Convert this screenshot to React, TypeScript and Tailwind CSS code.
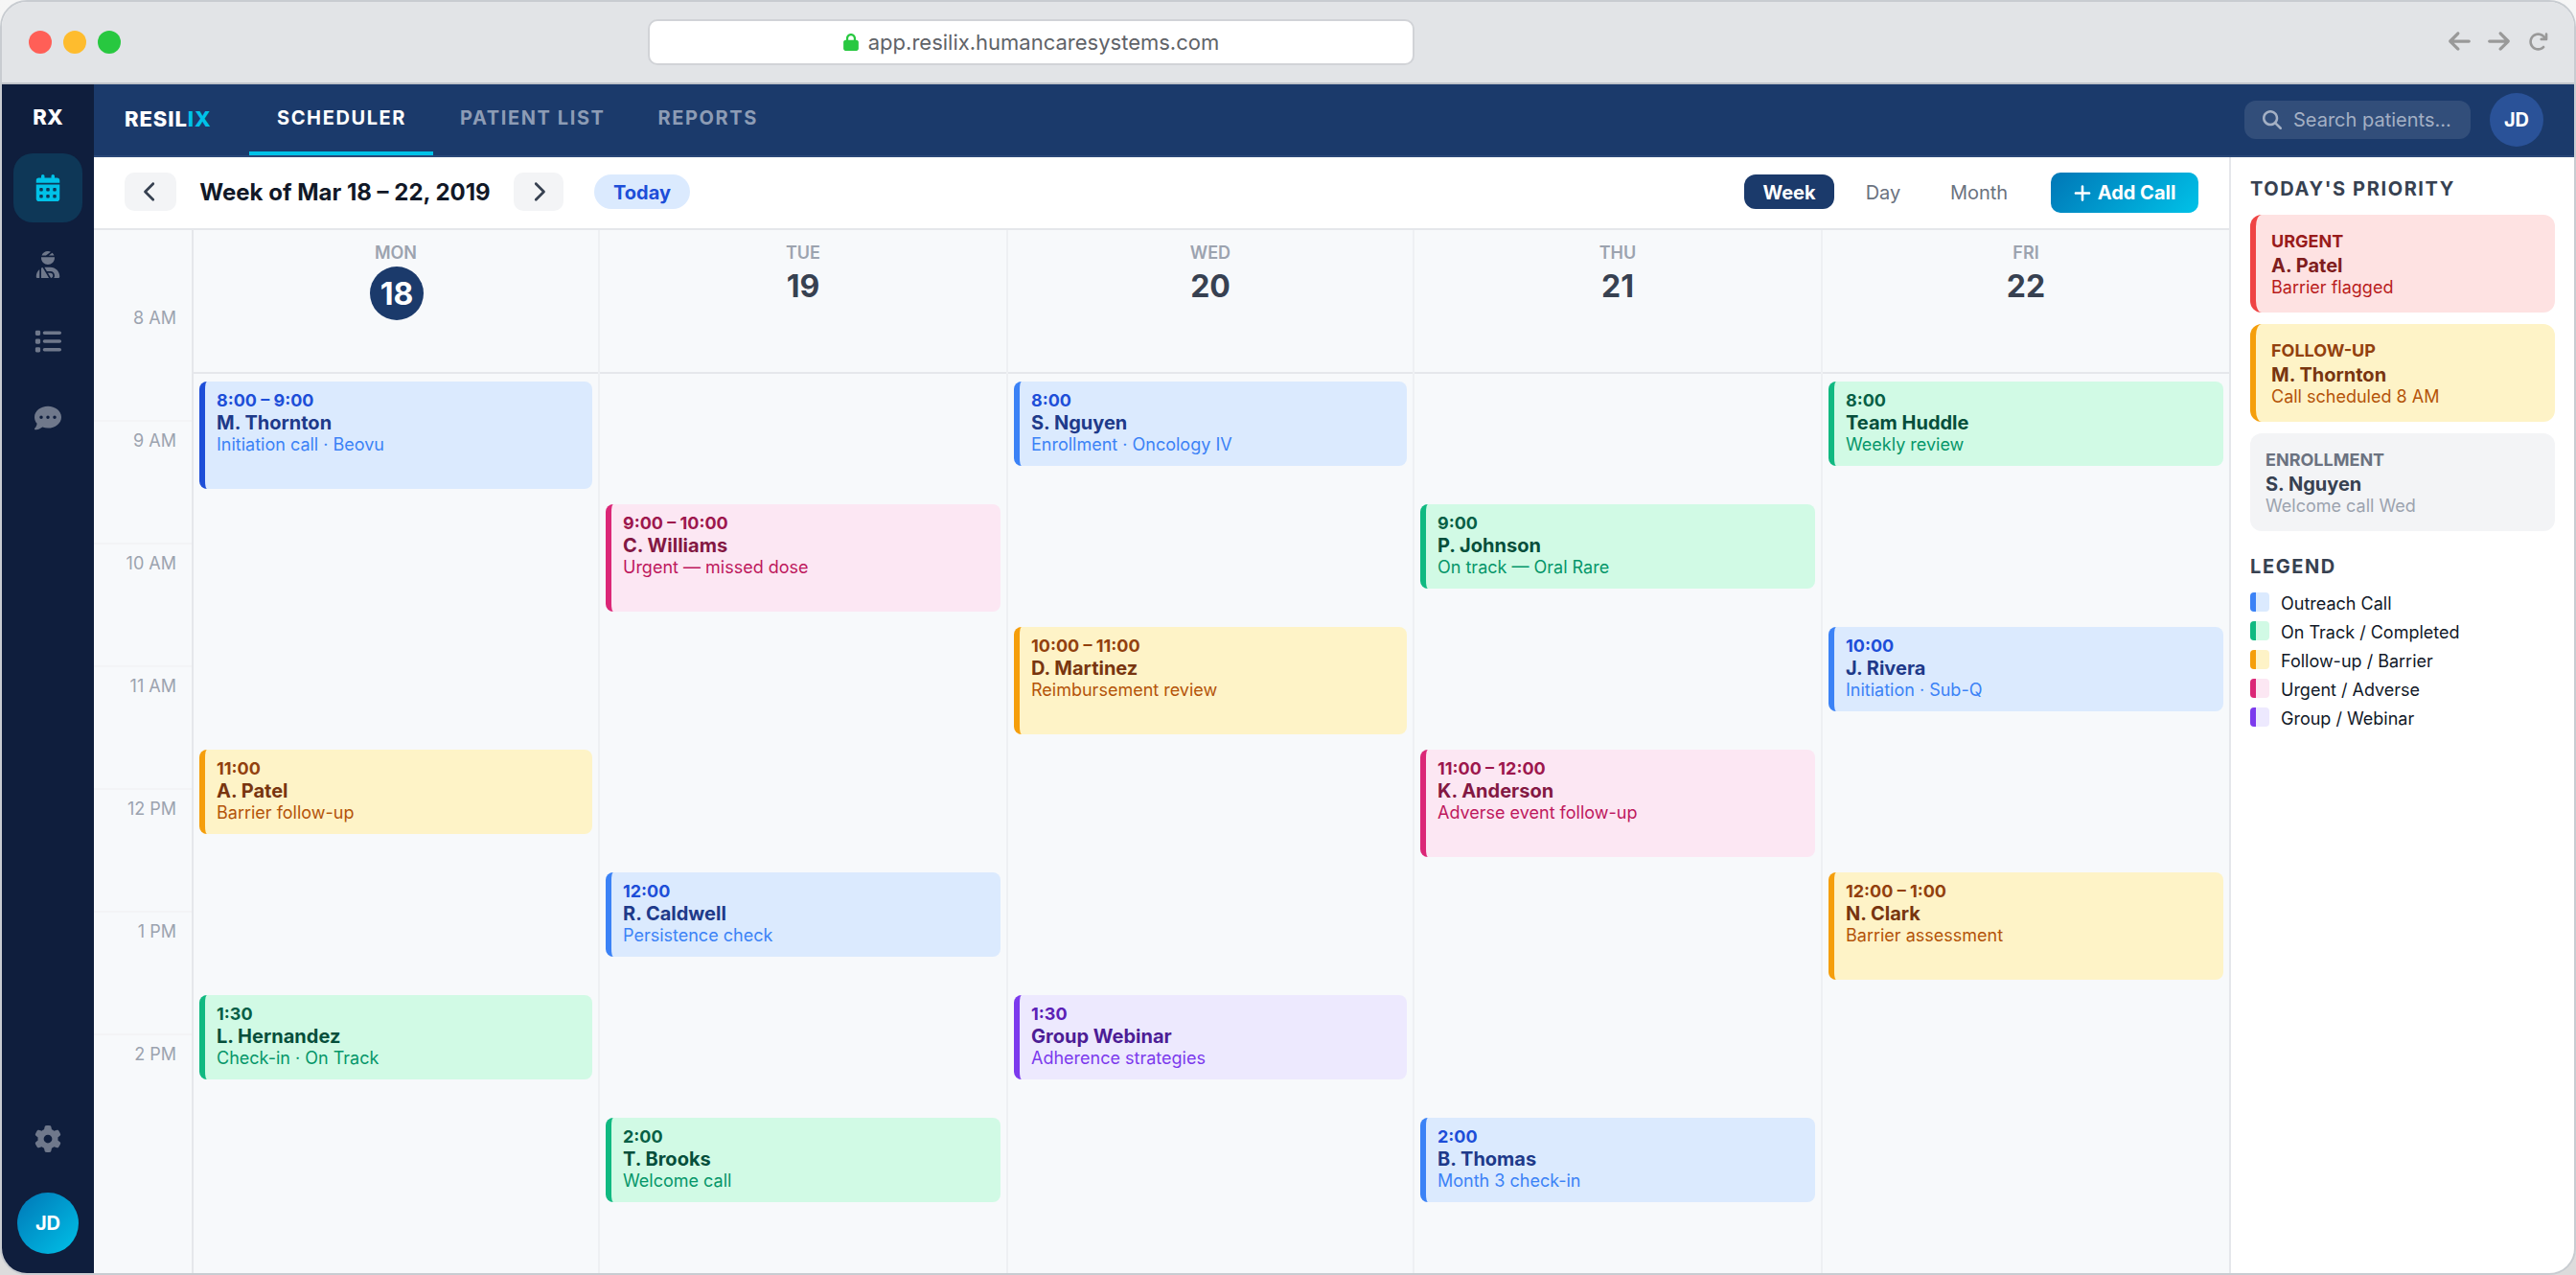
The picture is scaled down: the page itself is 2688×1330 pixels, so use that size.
import clsx from "clsx";
import {
  FaArrowLeft,
  FaArrowRight,
  FaArrowRotateRight,
  FaCalendarDays,
  FaChevronLeft,
  FaChevronRight,
  FaCommentDots,
  FaGear,
  FaList,
  FaLock,
  FaMagnifyingGlass,
  FaPlus,
  FaUserInjured,
} from "react-icons/fa6";

type Tone = "blue" | "blueStrong" | "green" | "amber" | "pink" | "purple";

type CalendarEvent = {
  row: number;
  time: string;
  name: string;
  note: string;
  tone: Tone;
  tall?: boolean;
};

type Day = { label: string; date: number; today?: boolean; events: CalendarEvent[] };

const tones: Record<Tone, { box: string; time: string; name: string; note: string }> = {
  blue: {
    box: "bg-[#dbeafe] border-[#3b82f6]",
    time: "text-[#1d4ed8]",
    name: "text-[#1e3a8a]",
    note: "text-[#3b82f6]",
  },
  blueStrong: {
    box: "bg-[#dbeafe] border-[#1d4ed8]",
    time: "text-[#1d4ed8]",
    name: "text-[#1e3a8a]",
    note: "text-[#3b82f6]",
  },
  green: {
    box: "bg-[#d1fae5] border-[#10b981]",
    time: "text-[#065f46]",
    name: "text-[#064e3b]",
    note: "text-[#059669]",
  },
  amber: {
    box: "bg-[#fef3c7] border-[#f59e0b]",
    time: "text-[#92400e]",
    name: "text-[#78350f]",
    note: "text-[#b45309]",
  },
  pink: {
    box: "bg-[#fce7f3] border-[#db2777]",
    time: "text-[#9d174d]",
    name: "text-[#831843]",
    note: "text-[#be185d]",
  },
  purple: {
    box: "bg-[#ede9fe] border-[#7c3aed]",
    time: "text-[#5b21b6]",
    name: "text-[#4c1d95]",
    note: "text-[#7c3aed]",
  },
};

const days: Day[] = [
  {
    label: "MON",
    date: 18,
    today: true,
    events: [
      { row: 1, time: "8:00 – 9:00", name: "M. Thornton", note: "Initiation call · Beovu", tone: "blueStrong", tall: true },
      { row: 4, time: "11:00", name: "A. Patel", note: "Barrier follow-up", tone: "amber" },
      { row: 6, time: "1:30", name: "L. Hernandez", note: "Check-in · On Track", tone: "green" },
    ],
  },
  {
    label: "TUE",
    date: 19,
    events: [
      { row: 2, time: "9:00 – 10:00", name: "C. Williams", note: "Urgent — missed dose", tone: "pink", tall: true },
      { row: 5, time: "12:00", name: "R. Caldwell", note: "Persistence check", tone: "blue" },
      { row: 7, time: "2:00", name: "T. Brooks", note: "Welcome call", tone: "green" },
    ],
  },
  {
    label: "WED",
    date: 20,
    events: [
      { row: 1, time: "8:00", name: "S. Nguyen", note: "Enrollment · Oncology IV", tone: "blue" },
      { row: 3, time: "10:00 – 11:00", name: "D. Martinez", note: "Reimbursement review", tone: "amber", tall: true },
      { row: 6, time: "1:30", name: "Group Webinar", note: "Adherence strategies", tone: "purple" },
    ],
  },
  {
    label: "THU",
    date: 21,
    events: [
      { row: 2, time: "9:00", name: "P. Johnson", note: "On track — Oral Rare", tone: "green" },
      { row: 4, time: "11:00 – 12:00", name: "K. Anderson", note: "Adverse event follow-up", tone: "pink", tall: true },
      { row: 7, time: "2:00", name: "B. Thomas", note: "Month 3 check-in", tone: "blue" },
    ],
  },
  {
    label: "FRI",
    date: 22,
    events: [
      { row: 1, time: "8:00", name: "Team Huddle", note: "Weekly review", tone: "green" },
      { row: 3, time: "10:00", name: "J. Rivera", note: "Initiation · Sub-Q", tone: "blue" },
      { row: 5, time: "12:00 – 1:00", name: "N. Clark", note: "Barrier assessment", tone: "amber", tall: true },
    ],
  },
];

const hours = ["8 AM", "9 AM", "10 AM", "11 AM", "12 PM", "1 PM", "2 PM"];

const priorities = [
  {
    tag: "URGENT",
    name: "A. Patel",
    note: "Barrier flagged",
    box: "border-l-6 border-[#ef4444] bg-[#fee2e2]",
    tagColor: "text-[#991b1b]",
    nameColor: "text-[#7f1d1d]",
    noteColor: "text-[#b91c1c]",
  },
  {
    tag: "FOLLOW-UP",
    name: "M. Thornton",
    note: "Call scheduled 8 AM",
    box: "border-l-6 border-[#f59e0b] bg-[#fef3c7]",
    tagColor: "text-[#92400e]",
    nameColor: "text-[#78350f]",
    noteColor: "text-[#b45309]",
  },
  {
    tag: "ENROLLMENT",
    name: "S. Nguyen",
    note: "Welcome call Wed",
    box: "bg-[#f3f4f6]",
    tagColor: "text-[#6b7280]",
    nameColor: "text-[#374151]",
    noteColor: "text-[#9ca3af]",
  },
];

const legend: { label: string; tone: Tone }[] = [
  { label: "Outreach Call", tone: "blue" },
  { label: "On Track / Completed", tone: "green" },
  { label: "Follow-up / Barrier", tone: "amber" },
  { label: "Urgent / Adverse", tone: "pink" },
  { label: "Group / Webinar", tone: "purple" },
];

const rowStart = ["", "row-start-1", "row-start-2", "row-start-3", "row-start-4", "row-start-5", "row-start-6", "row-start-7"];

function BrowserBar() {
  return (
    <div className="flex h-[86px] shrink-0 items-center border-b-2 border-[#c0c4ca] bg-[#e2e4e7] pr-[27px] pl-7">
      <div className="flex gap-3">
        <span className="size-6 rounded-full bg-[#ff5f57]" />
        <span className="size-6 rounded-full bg-[#febc2e]" />
        <span className="size-6 rounded-full bg-[#28c840]" />
      </div>
      <div className="ml-[550px] flex h-12 w-[800px] items-center justify-center gap-2.5 rounded-[10px] border-2 border-[#d1d3d7] bg-white text-[22px] text-[#5f6368]">
        <FaLock className="h-[18px] w-4 text-[#28c840]" />
        app.resilix.humancaresystems.com
      </div>
      <div className="ml-auto flex items-center pb-0.5 text-[#999]">
        <FaArrowLeft className="h-[26px] w-[23px]" />
        <FaArrowRight className="ml-[18px] h-[26px] w-[23px]" />
        <FaArrowRotateRight className="ml-[19px] size-[21px]" />
      </div>
    </div>
  );
}

function Sidebar() {
  const item = "flex size-18 items-center justify-center rounded-[20px]";
  return (
    <aside className="flex w-24 shrink-0 flex-col items-center gap-2 bg-[#0f1e3d] pb-5 text-[28px] text-[#6f788b]">
      <div className="flex h-16 items-center pt-1 text-[22px] font-extrabold text-white">RX</div>
      <div className={clsx(item, "bg-[#0e3757] text-[#00c2e8]")}>
        <FaCalendarDays />
      </div>
      <div className={item}>
        <FaUserInjured />
      </div>
      <div className={item}>
        <FaList />
      </div>
      <div className={item}>
        <FaCommentDots />
      </div>
      <div className={clsx(item, "mt-auto")}>
        <FaGear />
      </div>
      <div className="mt-3 flex size-16 items-center justify-center rounded-full bg-linear-135 from-[#0077b6] to-[#00c2e8] text-[20px] font-bold text-white">
        JD
      </div>
    </aside>
  );
}

function Header() {
  return (
    <header className="flex h-[76px] shrink-0 items-center border-b-2 border-[#2a4878] bg-[#1b3a6b] px-8">
      <div className="w-[130px] pb-0.5 text-[22px] font-extrabold tracking-[0.9px] text-white">
        RESIL<span className="text-[#00c2e8]">IX</span>
      </div>
      <nav className="flex h-full items-stretch text-[20px] font-bold tracking-[1.6px] text-[#8d9cb5]">
        <div className="border-b-4 border-[#00c2e8] pt-5 pr-7 pl-[29px] text-white">SCHEDULER</div>
        <div className="px-7 pt-5">PATIENT LIST</div>
        <div className="pt-5 pl-[27px]">REPORTS</div>
      </nav>
      <div className="ml-auto flex items-center gap-5">
        <div className="flex h-10 w-[236px] items-center gap-3 rounded-[12px] bg-white/10 pl-[19px] text-[20px] text-[#a4b0c4]">
          <FaMagnifyingGlass className="size-5" />
          Search patients...
        </div>
        <div className="flex size-14 items-center justify-center rounded-full bg-[#2a5298] text-[20px] font-bold text-white">
          JD
        </div>
      </div>
    </header>
  );
}

function Toolbar() {
  return (
    <div className="flex h-[76px] shrink-0 items-start justify-between border-b-2 border-[#e5e7eb] bg-white px-8 pt-4">
      <div className="flex h-10 items-center">
        <button className="flex h-10 w-[54px] items-center justify-center rounded-[10px] bg-[#f3f4f6] text-[#374151]">
          <FaChevronLeft className="size-[22px]" />
        </button>
        <h1 className="w-[352px] pt-0.5 text-center text-[24px] font-bold text-[#111827]">Week of Mar 18 – 22, 2019</h1>
        <button className="flex h-10 w-[52px] items-center justify-center rounded-[10px] bg-[#f3f4f6] text-[#374151]">
          <FaChevronRight className="size-[22px]" />
        </button>
        <button className="ml-8 h-9 w-[100px] rounded-full bg-[#dbeafe] pt-px text-[20px] font-bold text-[#1d4ed8]">
          Today
        </button>
      </div>
      <div className="flex items-start text-[20px]">
        <div className="mt-0.5 flex h-9 items-center text-[#6b7280]">
          <button className="h-9 w-[94px] rounded-[12px] bg-[#1b3a6b] pt-px font-bold text-white">Week</button>
          <button className="h-9 w-[102px] pt-px">Day</button>
          <button className="h-9 w-[98px] pt-px">Month</button>
        </div>
        <button className="ml-[26px] flex h-[42px] w-[154px] items-center justify-center gap-[7px] rounded-[10px] bg-linear-135 from-[#0077b6] to-[#00c2e8] font-bold text-white">
          <FaPlus className="h-[21px] w-[18px]" />
          Add Call
        </button>
      </div>
    </div>
  );
}

function EventCard({ event }: { event: CalendarEvent }) {
  const tone = tones[event.tone];
  return (
    <div
      className={clsx(
        "mx-1.5 rounded-[8px] border-l-6 pt-[9px] pl-3",
        event.tall ? "h-28" : "h-22",
        rowStart[event.row],
        tone.box,
      )}
    >
      <div className={clsx("text-[18px] leading-[22px] font-bold", tone.time)}>{event.time}</div>
      <div className={clsx("text-[20px] leading-[25px] font-bold", tone.name)}>{event.name}</div>
      <div className={clsx("-mt-px text-[18px] leading-[22px]", tone.note)}>{event.note}</div>
    </div>
  );
}

function DayColumn({ day }: { day: Day }) {
  return (
    <div className="flex min-w-0 flex-col border-r-2 border-[#eef0f3] last:border-r-0">
      <div className="h-[150px] shrink-0 border-b-2 border-[#e5e7eb] pt-[13px] text-center">
        <div className="text-[18px] leading-[22px] font-semibold text-[#9ca3af]">{day.label}</div>
        {day.today ? (
          <div className="mx-auto mt-[3px] flex size-14 translate-x-px items-center justify-center rounded-full bg-[#1b3a6b] pt-0.5 text-[32px] font-bold text-white">
            {day.date}
          </div>
        ) : (
          <div className="mt-1 text-[32px] leading-[40px] font-bold text-[#374151]">{day.date}</div>
        )}
      </div>
      <div className="grid grid-rows-[repeat(7,128px)] pt-2">
        {day.events.map((event) => (
          <EventCard key={event.name} event={event} />
        ))}
      </div>
    </div>
  );
}

function Calendar() {
  return (
    <div className="flex min-h-0 flex-1 overflow-hidden bg-[#f7f9fb]">
      <div className="w-[104px] shrink-0 border-r-2 border-[#e5e7eb] pt-[72px]">
        {hours.map((hour) => (
          <div
            key={hour}
            className="h-32 border-b-2 border-[#f3f4f6] pt-[9px] pr-4 text-right text-[18px] leading-[22px] text-[#9ca3af] last:border-b-0"
          >
            {hour}
          </div>
        ))}
      </div>
      <div className="grid flex-1 grid-cols-[424px_426px_424px_426px_424px]">
        {days.map((day) => (
          <DayColumn key={day.label} day={day} />
        ))}
      </div>
    </div>
  );
}

function SidePanel() {
  return (
    <aside className="w-[360px] shrink-0 border-l-2 border-[#e5e7eb] bg-white px-5 pt-[21px]">
      <h2 className="text-[20px] leading-[24px] font-bold tracking-[1.6px] text-[#374151]">TODAY'S PRIORITY</h2>
      <div className="mt-[15px] flex flex-col gap-3">
        {priorities.map((item) => (
          <div key={item.tag} className={clsx("h-[102px] rounded-[12px] px-4 pt-[17px]", item.box)}>
            <div className={clsx("text-[18px] leading-[22px] font-bold", item.tagColor)}>{item.tag}</div>
            <div className={clsx("mt-0.5 text-[20px] leading-[25px] font-bold", item.nameColor)}>{item.name}</div>
            <div className={clsx("-mt-px text-[18px] leading-[22px]", item.noteColor)}>{item.note}</div>
          </div>
        ))}
      </div>
      <h2 className="mt-[25px] text-[20px] leading-[24px] font-bold tracking-[1.6px] text-[#374151]">LEGEND</h2>
      <ul className="mt-[15px] flex flex-col gap-2">
        {legend.map((item) => (
          <li key={item.label} className="flex h-[22px] items-start gap-3 text-[18px] leading-[24px] text-[#111827]">
            <span className={clsx("size-5 rounded-[4px] border-l-6", tones[item.tone].box)} />
            {item.label}
          </li>
        ))}
      </ul>
    </aside>
  );
}

export default function App() {
  return (
    <div className="h-[1330px] w-[2688px] bg-linear-to-b from-[#f6f6f6] to-[#dcdcdc] font-['Inter',sans-serif]">
      <div className="flex h-full flex-col overflow-hidden rounded-[28px] border-2 border-[#c8ccd1]">
        <BrowserBar />
        <div className="flex min-h-0 flex-1">
          <Sidebar />
          <div className="flex min-w-0 flex-1 flex-col">
            <Header />
            <div className="flex min-h-0 flex-1">
              <main className="flex min-w-0 flex-1 flex-col">
                <Toolbar />
                <Calendar />
              </main>
              <SidePanel />
            </div>
          </div>
        </div>
      </div>
    </div>
  );
}
